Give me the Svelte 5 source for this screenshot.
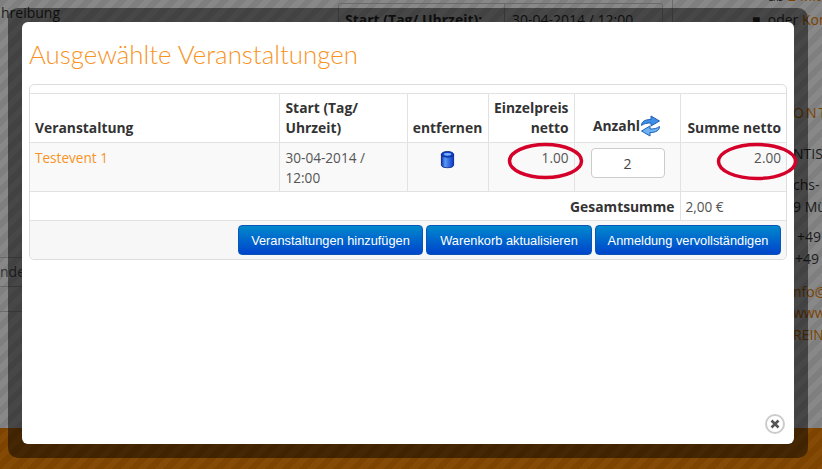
<script>
    let rows = [{name: "Testevent 1", start: "30-04-2014 / 12:00", price: "1.00", qty: 2, sum: "2.00"}];
    let buttons = ["Veranstaltungen hinzufügen", "Warenkorb aktualisieren", "Anmeldung vervollständigen"];
</script>

<div class="page">
    <div class="content"></div>
    <div class="footer"></div>

    <!-- page behind the dimmed overlay -->
    <div class="behind">
        <span class="bg t1">hreibung</span>
        <div class="bg box"></div>
        <div class="bg l4"></div>
        <div class="bg l5"></div>
        <span class="bg t2">Start (Tag/ Uhrzeit):</span>
        <span class="bg t3">30-04-2014 / 12:00</span>
        <span class="bg t4">■ &nbsp;oder <i>Kon</i></span>
        <span class="bg t5">ab <i>2 Mit</i></span>
        <span class="bg t6"><i>ONT</i></span>
        <span class="bg t7">NTIS</span>
        <span class="bg t8">chs-</span>
        <span class="bg t9">9 Mü</span>
        <span class="bg t10">+49</span>
        <span class="bg t11">+49</span>
        <span class="bg t12"><i>nfo@</i></span>
        <span class="bg t13"><i>www.</i></span>
        <span class="bg t14"><i>REINV</i></span>
        <span class="bg t15">nde</span>
        <div class="bg l1"></div>
        <div class="bg l2"></div>
        <div class="bg l3"></div>
    </div>

    <div class="frame">
        <div class="modal">
            <h1>Ausgewählte Veranstaltungen</h1>
            <div class="panel">
                <table>
                    <colgroup>
                        <col style="width:249px"><col style="width:128px"><col style="width:81px"><col style="width:86px"><col style="width:106px"><col style="width:106px">
                    </colgroup>
                    <thead>
                        <tr>
                            <th>Veranstaltung</th>
                            <th class="start">Start (Tag/ Uhrzeit)</th>
                            <th class="c">entfernen</th>
                            <th class="r">Einzelpreis netto</th>
                            <th class="c anz">
                                <span class="anzahl">Anzahl<svg width="21" height="22" viewBox="0 0 21 22">
                                    <path d="M1.5 10.5 C1.5 6.5 5 4.5 11 4.5 L11 1 L19.5 6 L11 11 L11 8 C7 8 4 8.5 1.5 10.5Z" fill="#3f8fe6" stroke="#1f62b8" stroke-width="1"/>
                                    <path d="M19.5 11.5 C19.5 15.5 16 17.5 10 17.5 L10 21 L1.5 16 L10 11 L10 14 C14 14 17 13.5 19.5 11.5Z" fill="#6db3f2" stroke="#1f62b8" stroke-width="1"/>
                                </svg></span>
                            </th>
                            <th class="r">Summe netto</th>
                        </tr>
                    </thead>
                    <tbody>
                        {#each rows as row}
                            <tr class="item">
                                <td><span class="link">{row.name}</span></td>
                                <td class="start"><span class="date">{row.start}</span></td>
                                <td class="c icon">
                                    <svg width="15" height="19" viewBox="0 0 16 19">
                                        <defs>
                                            <linearGradient id="can" x1="0" x2="1" y1="0" y2="0">
                                                <stop offset="0" stop-color="#0b2fb0"/>
                                                <stop offset="0.3" stop-color="#5a9af5"/>
                                                <stop offset="1" stop-color="#0a36c8"/>
                                            </linearGradient>
                                        </defs>
                                        <path d="M1.5 4 V15.5 C1.5 17.3 4.5 18.2 8 18.2 S14.5 17.3 14.5 15.5 V4Z" fill="url(#can)" stroke="#0a2a8a" stroke-width="1"/>
                                        <ellipse cx="8" cy="4" rx="6.5" ry="3" fill="#1040d0" stroke="#0a2a8a" stroke-width="1"/>
                                        <ellipse cx="8" cy="4" rx="4" ry="1.5" fill="#79b3f7"/>
                                    </svg>
                                </td>
                                <td class="r">{row.price}</td>
                                <td class="c"><input type="text" value={row.qty}></td>
                                <td class="r">{row.sum}</td>
                            </tr>
                        {/each}
                        <tr class="total">
                            <td colspan="5" class="r"><b>Gesamtsumme</b></td>
                            <td>2,00 €</td>
                        </tr>
                    </tbody>
                </table>
                <div class="actions">
                    {#each buttons as label}
                        <button>{label}</button>
                    {/each}
                </div>
            </div>
            <div class="close">
                <svg width="10" height="10" viewBox="0 0 10 10"><path d="M1.5 1.5 L8.5 8.5 M8.5 1.5 L1.5 8.5" stroke="#555" stroke-width="2.6"/></svg>
            </div>
        </div>
    </div>

    <svg class="marks" width="822" height="469" viewBox="0 0 822 469">
        <ellipse cx="545.5" cy="161" rx="36" ry="16.5" fill="none" stroke="#d4002a" stroke-width="3.5"/>
        <ellipse cx="757" cy="161.5" rx="38.5" ry="17" fill="none" stroke="#d4002a" stroke-width="3.5"/>
    </svg>
</div>

<style>
    :global(body) {
        margin: 0;
    }
    .page {
        position: relative;
        width: 822px;
        height: 469px;
        overflow: hidden;
        display: flex;
        flex-direction: column;
        font-family: "Open Sans", sans-serif;
        color: #333;
    }
    .content {
        flex: 1;
        background: repeating-linear-gradient(135deg, #7f7f7f 0 6px, #888 6px 12px);
    }
    .footer {
        height: 41px;
        background: repeating-linear-gradient(135deg, #7c4400 0 6px, #854b06 6px 12px);
    }
    .behind {
        position: absolute;
        inset: 0;
    }
    .bg {
        position: absolute;
        font-size: 14px;
        line-height: 18px;
        color: #1c1c1c;
        white-space: nowrap;
    }
    .bg i {
        font-style: normal;
        color: #7a4300;
    }
    .t1 { left: 1px; top: 4px; }
    .box { left: 338px; top: 3px; width: 323px; height: 30px; border: 1px solid #6a6a6a; border-radius: 3px; }
    .l4 { left: 504px; top: 3px; width: 1px; height: 20px; background: #6a6a6a; }
    .l5 { left: 672px; top: 0; width: 1px; height: 22px; background: #6a6a6a; }
    .t2 { left: 345px; top: 11px; font-weight: 700; }
    .t3 { left: 512px; top: 11px; }
    .t4 { left: 752px; top: 11px; }
    .t5 { left: 768px; top: -13px; }
    .t6 { left: 793px; top: 104px; letter-spacing: 2px; }
    .t7 { left: 793px; top: 145px; }
    .t8 { left: 793px; top: 176px; }
    .t9 { left: 793px; top: 198px; }
    .t10 { left: 797px; top: 228px; }
    .t11 { left: 795px; top: 250px; }
    .t12 { left: 793px; top: 283px; }
    .t13 { left: 793px; top: 304px; }
    .t14 { left: 793px; top: 326px; }
    .t15 { left: 0; top: 263px; color: #333; }
    .l1 { left: 0; top: 257px; width: 22px; height: 1px; background: #6a6a6a; }
    .l2 { left: 0; top: 286px; width: 22px; height: 1px; background: #6a6a6a; }
    .l3 { left: 0; top: 311px; width: 22px; height: 1px; background: #6a6a6a; }
    .frame {
        position: absolute;
        left: 8px;
        top: 8px;
        width: 772px;
        height: 422px;
        padding: 14px;
        border-radius: 10px;
        background: rgba(0, 0, 0, 0.48);
    }
    .modal {
        position: relative;
        height: 100%;
        box-sizing: border-box;
        padding: 17px 7px 0;
        background: #fff;
        border-radius: 6px;
    }
    h1 {
        margin: 0 0 15px;
        font-family: Lato, sans-serif;
        font-weight: 300;
        font-size: 25.85px;
        line-height: 30px;
        color: #f7931e;
    }
    .panel {
        border: 1px solid #ddd;
        border-radius: 5px;
        padding-top: 8px;
        width: 756px;
    }
    table {
        table-layout: fixed;
        border-collapse: collapse;
        width: 756px;
        font-size: 13.6px;
        line-height: 20px;
        color: #555;
    }
    th, td {
        border: 1px solid #e2e2e2;
        padding: 5px 5px 3px;
    }
    tr > :first-child { border-left: 0; }
    tr > :last-child { border-right: 0; }
    th {
        text-align: left;
        vertical-align: bottom;
        font-weight: 700;
        font-size: 13.85px;
        padding: 4px 5px;
        color: #333;
    }
    td {
        vertical-align: top;
    }
    th.start, td.start {
        padding-left: 6px;
    }
    b {
        color: #333;
        font-size: 13.85px;
    }
    .r { text-align: right; }
    .c { text-align: center; }
    th.anz { padding: 4px 0; }
    .anzahl {
        display: inline-flex;
        align-items: center;
        position: relative;
        top: -1px;
    }
    .item td {
        background: #f9f9f9;
    }
    .date {
        display: block;
        width: 95px;
    }
    .icon svg {
        display: block;
        margin: 2px auto 0;
    }
    .link { color: #f7931e; }
    input {
        display: block;
        width: 74px;
        height: 30px;
        box-sizing: border-box;
        margin: 0 10px 0 11px;
        border: 1px solid #ccc;
        border-radius: 4px;
        background: #fff;
        text-align: center;
        font: 14px "Open Sans", sans-serif;
        color: #444;
    }
    .actions {
        display: grid;
        grid-template-columns: 185px 166px 186px;
        justify-content: end;
        gap: 3px;
        padding: 4px 5px;
        background: #f7f7f7;
        border-radius: 0 0 5px 5px;
    }
    button {
        height: 30px;
        padding: 0;
        border: 1px solid #0a55b5;
        border-radius: 4px;
        background: linear-gradient(#0088cc, #0044cc);
        color: #fff;
        font: 12.8px "Liberation Sans", sans-serif;
    }
    .close {
        position: absolute;
        right: 9px;
        bottom: 10px;
        width: 16px;
        height: 16px;
        border: 2px solid #ccc;
        border-radius: 50%;
        display: flex;
        align-items: center;
        justify-content: center;
        background: #fff;
    }
    .marks {
        position: absolute;
        left: 0;
        top: 0;
    }
</style>
